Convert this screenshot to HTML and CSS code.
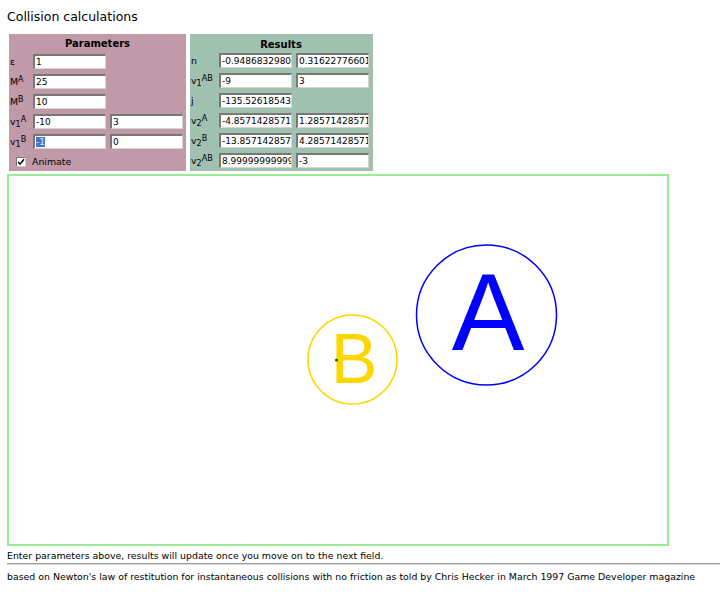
FILE: index.html
```html
<!DOCTYPE html>
<html>
<head>
<meta charset="utf-8">
<title>Collision calculations</title>
<link rel="stylesheet" href="styles.css">
</head>
<body>
<h1 class="title">Collision calculations</h1>
<div class="panels">
  <div class="panel params">
    <div class="panel-head">Parameters</div>
    <div class="grid grid-params">
      <span class="lbl">ε</span><span class="field">1</span><span></span>
      <span class="lbl">M<sup>A</sup></span><span class="field">25</span><span></span>
      <span class="lbl">M<sup>B</sup></span><span class="field">10</span><span></span>
      <span class="lbl">v<sub>1</sub><sup>A</sup></span><span class="field">-10</span><span class="field">3</span>
      <span class="lbl">v<sub>1</sub><sup>B</sup></span><span class="field"><span class="sel">-1</span></span><span class="field">0</span>
      <label class="anim"><span class="check"><svg width="8" height="8" viewBox="0 0 8 8"><path d="M1 4 L3 6.2 L7 1.2" fill="none" stroke="#000" stroke-width="1.5"/></svg></span>Animate</label>
    </div>
  </div>
  <div class="panel results">
    <div class="panel-head">Results</div>
    <div class="grid grid-results">
      <span class="lbl">n</span><span class="field">-0.9486832980</span><span class="field">0.31622776601</span>
      <span class="lbl">v<sub>1</sub><sup>AB</sup></span><span class="field">-9</span><span class="field">3</span>
      <span class="lbl">j</span><span class="field">-135.52618543</span><span></span>
      <span class="lbl">v<sub>2</sub><sup>A</sup></span><span class="field">-4.8571428571</span><span class="field">1.28571428571</span>
      <span class="lbl">v<sub>2</sub><sup>B</sup></span><span class="field">-13.857142857</span><span class="field">4.28571428571</span>
      <span class="lbl">v<sub>2</sub><sup>AB</sup></span><span class="field">8.99999999999</span><span class="field">-3</span>
    </div>
  </div>
</div>
<div class="canvas">
  <svg width="658" height="368" viewBox="0 0 658 368">
    <circle cx="477.5" cy="139" r="70" fill="none" stroke="#0000ff" stroke-width="1.5"/>
    <text x="479" y="174" class="big" text-anchor="middle" fill="#0000ff" font-size="109">A</text>
    <circle cx="343.5" cy="183.5" r="44.5" fill="none" stroke="#ffd700" stroke-width="1.5"/>
    <text x="345" y="207" class="big" text-anchor="middle" fill="#ffd700" font-size="70">B</text>
    <circle cx="327.5" cy="184" r="1.6" fill="#008000"/>
  </svg>
</div>
<p class="note">Enter parameters above, results will update once you move on to the next field.</p>
<hr class="rule">
<p class="footer">based on Newton's law of restitution for instantaneous collisions with no friction as told by Chris Hecker in March 1997 Game Developer magazine</p>
</body>
</html>
```
FILE: styles.css
```css
html, body {
  margin: 0;
  background: #ffffff;
}
body {
  padding: 9px 0 0 7px;
  font-family: "DejaVu Sans", Verdana, sans-serif;
  color: #000;
}
.title {
  margin: 0;
  font-size: 12.5px;
  font-weight: normal;
  line-height: 15px;
}
.panels {
  display: flex;
  gap: 4px;
  padding: 2px;
  margin-top: 8px;
  align-items: stretch;
}
.panel {
  box-sizing: border-box;
  height: 137px;
}
.params {
  width: 177px;
  background: #c09aa9;
  padding: 3px 3px 0 1px;
}
.results {
  width: 183px;
  background: #a0c0b0;
  padding: 2px 4px 0 1px;
}
.panel-head {
  text-align: center;
  font-weight: bold;
  font-size: 10px;
  line-height: 14px;
  height: 14px;
  margin-bottom: 3px;
  padding-left: 2px;
}
.results .panel-head {
  margin-top: 2px;
  margin-bottom: 1px;
}
.grid {
  display: grid;
  grid-auto-rows: 15px;
  row-gap: 5px;
  column-gap: 4px;
  font-size: 9.4px;
}
.grid-params {
  grid-template-columns: 19px 73px 73px;
}
.grid-results {
  grid-template-columns: 24px 73px 73px;
}
.lbl {
  align-self: center;
  line-height: 15px;
  white-space: nowrap;
}
.lbl sup, .lbl sub {
  font-size: 8px;
  line-height: 0;
}
.lbl sup { vertical-align: 3px; }
.lbl sub { vertical-align: -2px; }
.field {
  box-sizing: border-box;
  height: 15px;
  background: #ffffff;
  border-style: solid;
  border-width: 2px 1px 1px 2px;
  border-color: #777 #d8d4cc #d8d4cc #777;
  padding-left: 1px;
  line-height: 12px;
  font-size: 9px;
  white-space: nowrap;
  overflow: hidden;
}
.sel {
  background: #4574cf;
  color: #dde6ff;
}
.anim {
  grid-column: 1 / 4;
  display: flex;
  align-items: center;
  gap: 6px;
  padding-left: 6px;
  font-size: 9.4px;
  line-height: 15px;
}
.check {
  box-sizing: border-box;
  width: 10px;
  height: 10px;
  background: #fff;
  border-style: solid;
  border-width: 1px;
  border-color: #777 #ccc #ccc #777;
  display: flex;
  align-items: center;
  justify-content: center;
}
.check svg { display: block; }
.canvas {
  width: 658px;
  height: 368px;
  border: 2px solid #98ec98;
  margin-top: 1px;
}
.canvas svg { display: block; }
.big {
  font-family: "Liberation Sans", Arial, sans-serif;
}
.note {
  margin: 4px 0 0 0;
  font-size: 9.4px;
  line-height: 11px;
}
.rule {
  margin: 2px 0 0 0;
  border: none;
  border-top: 1px solid #999;
  border-bottom: 1px solid #ddd;
  height: 0;
}
.footer {
  margin: 6px 0 0 0;
  font-size: 9.4px;
  line-height: 11px;
}
```
